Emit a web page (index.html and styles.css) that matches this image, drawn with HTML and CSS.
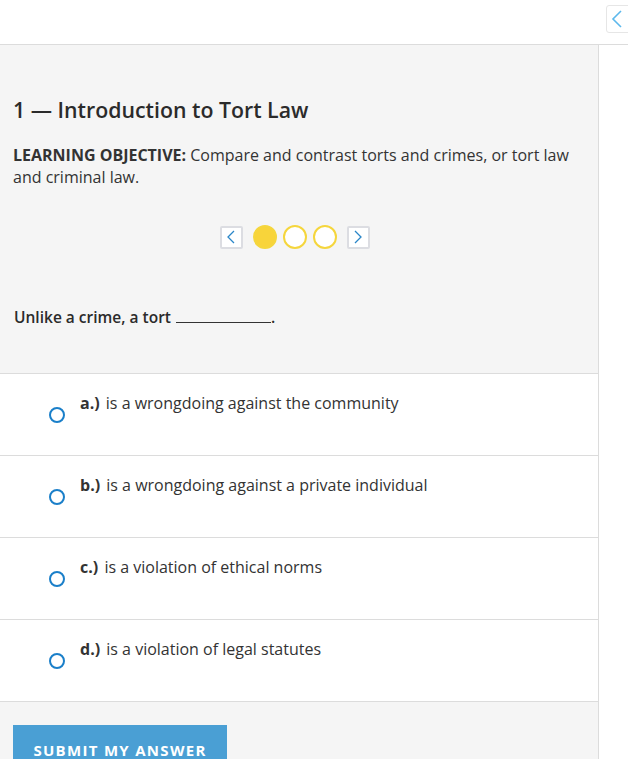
FILE: index.html
```html
<!DOCTYPE html>
<html>
<head>
<meta charset="utf-8">
<link rel="stylesheet" href="styles.css">
</head>
<body>
<header class="topbar">
  <button class="collapse-btn" aria-label="collapse">
    <svg width="12" height="20" viewBox="0 0 12 20"><path d="M10 2 L2 10 L10 18" fill="none" stroke="#5cb8ec" stroke-width="1.6"/></svg>
  </button>
</header>
<div class="layout">
  <main class="main">
    <section class="intro">
      <h1 class="title">1 — Introduction to Tort Law</h1>
      <p class="objective"><strong class="label">LEARNING OBJECTIVE:</strong> <span>Compare and contrast torts and crimes, or tort law and criminal law.</span></p>
      <div class="pager">
        <span class="pager-btn"><svg width="8" height="14" viewBox="0 0 8 14"><path d="M7 1 L1 7 L7 13" fill="none" stroke="#2a86c8" stroke-width="1.3"/></svg></span>
        <span class="dot dot-active"></span>
        <span class="dot"></span>
        <span class="dot"></span>
        <span class="pager-btn"><svg width="8" height="14" viewBox="0 0 8 14"><path d="M1 1 L7 7 L1 13" fill="none" stroke="#2a86c8" stroke-width="1.3"/></svg></span>
      </div>
      <p class="question">Unlike a crime, a tort <span class="blank"></span>.</p>
    </section>
    <ul class="options">
      <li class="option"><span class="radio"></span><span class="opt-text"><b>a.)</b> is a wrongdoing against the community</span></li>
      <li class="option"><span class="radio"></span><span class="opt-text"><b>b.)</b> is a wrongdoing against a private individual</span></li>
      <li class="option"><span class="radio"></span><span class="opt-text"><b>c.)</b> is a violation of ethical norms</span></li>
      <li class="option"><span class="radio"></span><span class="opt-text"><b>d.)</b> is a violation of legal statutes</span></li>
    </ul>
    <div class="actions">
      <button class="submit">SUBMIT MY ANSWER</button>
    </div>
  </main>
  <aside class="side"></aside>
</div>
</body>
</html>
```
FILE: styles.css
```css
* { box-sizing: border-box; }
html, body { margin: 0; padding: 0; }
body {
  font-family: "Open Sans", "Liberation Sans", sans-serif;
  color: #2b2b2b;
  background: #fff;
  width: 628px;
  height: 759px;
  overflow: hidden;
}
.topbar {
  height: 45px;
  border-bottom: 1px solid #dcdcdc;
  display: flex;
  justify-content: flex-end;
  padding-top: 5px;
}
.collapse-btn {
  width: 26px;
  height: 28px;
  margin-right: -4px;
  background: #fff;
  border: 1px solid #e6e6e6;
  border-radius: 3px;
  padding: 0 0 0 4px;
  display: flex;
  align-items: center;
}
.layout { display: flex; }
.main {
  width: 599px;
  border-right: 1px solid #dcdcdc;
  background: #f5f5f5;
}
.side { flex: 1; }
.intro {
  padding: 51px 13px 0 13px;
  height: 329px;
  border-bottom: 1px solid #dcdcdc;
}
.title {
  margin: 0;
  font-size: 21.3px;
  font-weight: 600;
  line-height: 28px;
  color: #2b2b2b;
}
.objective {
  margin: 20px 0 0;
  font-size: 16px;
  line-height: 22px;
  color: #333;
}
.objective .label { font-weight: 700; }
.pager {
  margin-top: 37px;
  display: flex;
  justify-content: center;
  align-items: center;
  gap: 6px;
  padding-right: 9px;
}
.pager-btn {
  width: 23px;
  height: 23px;
  border: 2px solid #dcdde2;
  border-radius: 2px;
  background: #fff;
  display: flex;
  align-items: center;
  justify-content: center;
}
.pager-btn:first-child { margin-right: 4px; }
.pager-btn:last-child { margin-left: 4px; }
.dot {
  width: 24px;
  height: 24px;
  border-radius: 50%;
  border: 2px solid #f5d63d;
  background: #fff;
}
.dot-active { background: #f8d43a; }
.question {
  margin: 57px 0 0 1px;
  font-size: 15.5px;
  line-height: 22px;
  font-weight: 600;
}
.blank {
  display: inline-block;
  width: 95px;
  border-bottom: 1px solid #333;
  vertical-align: baseline;
  margin-left: 1px;
}
.options { list-style: none; margin: 0; padding: 0; background: #fff; }
.option {
  height: 82px;
  border-bottom: 1px solid #dcdcdc;
  display: flex;
  align-items: flex-start;
  padding: 18px 0 0 49px;
}
.radio {
  flex: none;
  width: 16px;
  height: 16px;
  border: 2px solid #1a7fc9;
  border-radius: 50%;
  margin-top: 15px;
  margin-right: 15px;
}
.opt-text {
  font-size: 16px;
  line-height: 22px;
  color: #333;
}
.opt-text b { font-weight: 700; margin-right: 2px; }
.actions { padding: 23px 13px 0; height: 100px; }
.submit {
  width: 214px;
  height: 48px;
  background: #4a9fd4;
  border: none;
  color: #fff;
  font-family: "Open Sans", "Liberation Sans", sans-serif;
  font-weight: 700;
  font-size: 15px;
  letter-spacing: 1.3px;
  padding-top: 2px;
}
```
